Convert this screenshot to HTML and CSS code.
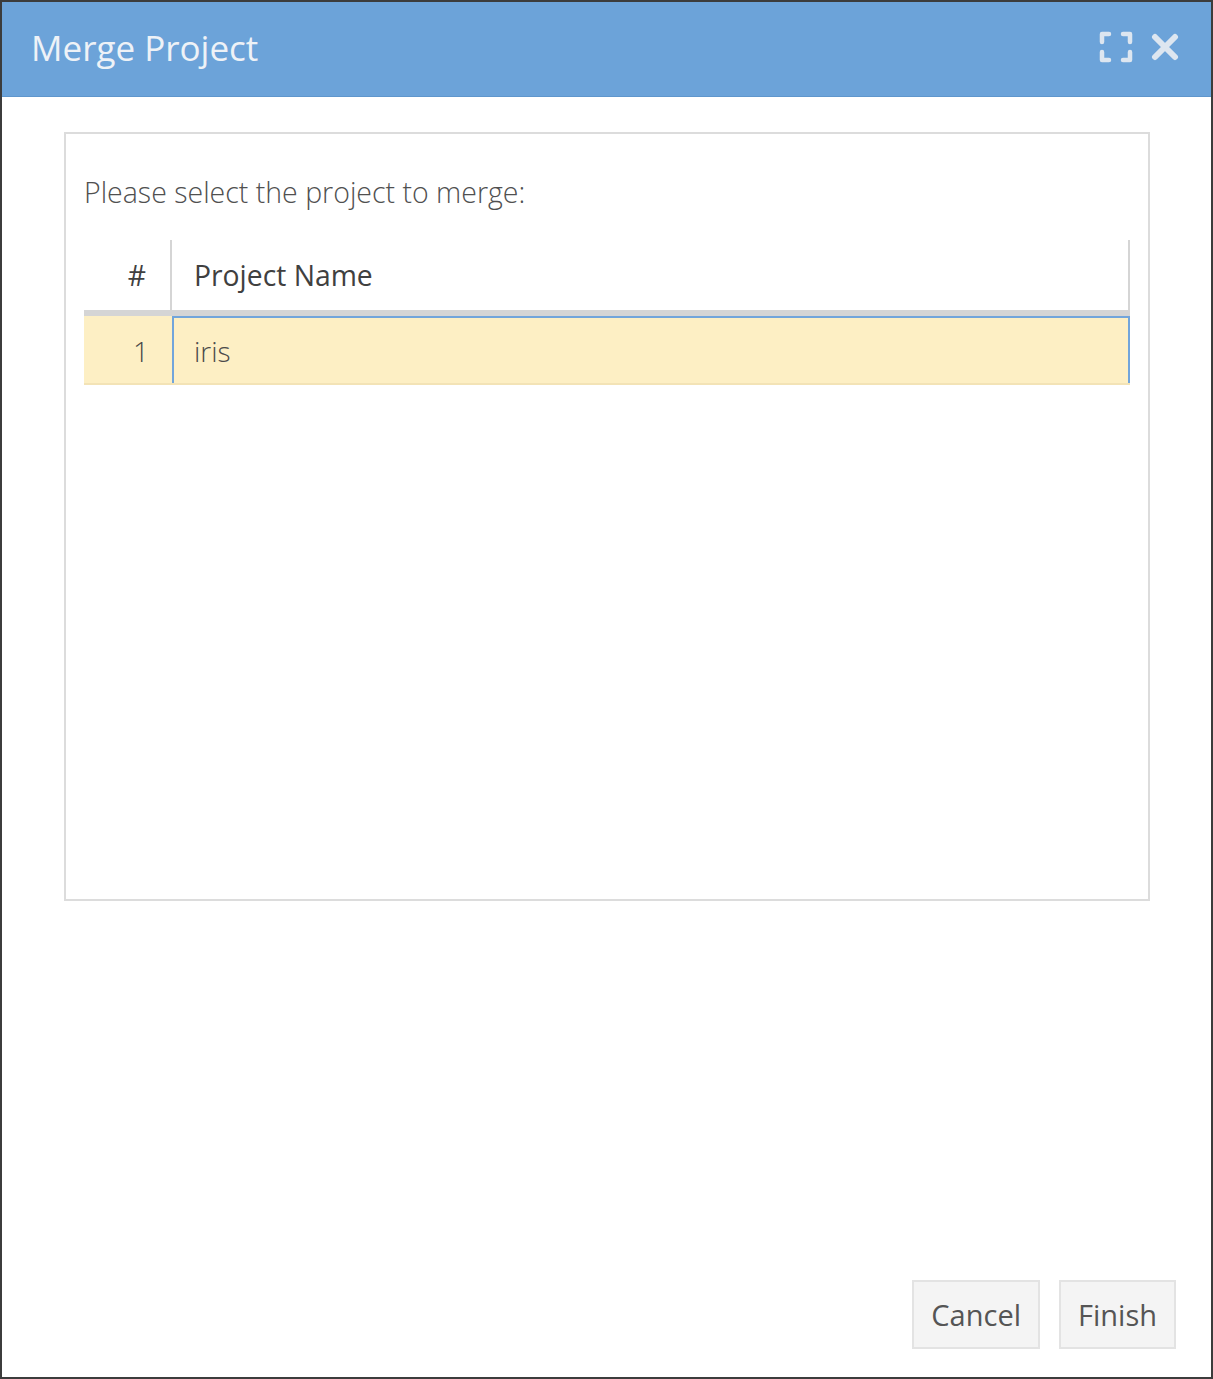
FILE: index.html
```html
<!DOCTYPE html>
<html>
<head>
<meta charset="utf-8">
<link rel="stylesheet" href="styles.css">
</head>
<body>
<div class="dialog">
  <div class="header">
    <div class="title">Merge Project</div>
    <div class="tools">
      <svg class="icon-max" width="34" height="32" viewBox="0 0 34 32">
        <path d="M3 11 V3 H10 M24 3 H31 V11 M31 21 V29 H24 M10 29 H3 V21" fill="none" stroke="#dde6f0" stroke-width="4.5" stroke-linecap="round" stroke-linejoin="round"/>
      </svg>
      <svg class="icon-close" width="28" height="28" viewBox="0 0 28 28">
        <path d="M4 4 L24 24 M24 4 L4 24" fill="none" stroke="#dde6f0" stroke-width="6" stroke-linecap="round"/>
      </svg>
    </div>
  </div>
  <div class="content">
    <div class="panel">
      <div class="prompt">Please select the project to merge:</div>
      <div class="grid">
        <div class="grid-head">
          <div class="col-num">#</div>
          <div class="col-name">Project Name</div>
        </div>
        <div class="grid-row selected">
          <div class="col-num">1</div>
          <div class="col-name cell-focus">iris</div>
        </div>
      </div>
    </div>
    <div class="buttons">
      <button class="btn">Cancel</button>
      <button class="btn">Finish</button>
    </div>
  </div>
</div>
</body>
</html>
```

FILE: styles.css
```css
html, body {
  margin: 0;
  padding: 0;
  background: #ffffff;
}
body {
  font-family: "Open Sans", "Noto Sans", sans-serif;
}
.dialog {
  width: 1213px;
  height: 1379px;
  box-sizing: border-box;
  border: 2px solid #3c3c3c;
  display: flex;
  flex-direction: column;
  background: #fff;
}
.header {
  height: 95px;
  box-sizing: border-box;
  background: #6ca3d9;
  border-bottom: 1px solid #5f96cc;
  display: flex;
  align-items: center;
  justify-content: space-between;
  padding: 0 32px 0 29px;
}
.title {
  color: #eef2f7;
  font-size: 35px;
  font-weight: 400;
  margin-top: -3px;
}
.tools {
  display: flex;
  align-items: center;
  gap: 18px;
  margin-top: -4px;
}
.content {
  flex: 1;
  display: flex;
  flex-direction: column;
  padding: 35px 61px 28px 62px;
}
.panel {
  height: 769px;
  box-sizing: border-box;
  border: 2px solid #dcdcdc;
  padding: 38px 18px 0 18px;
}
.prompt {
  font-size: 28.5px;
  font-weight: 300;
  color: #505050;
  line-height: 40px;
  margin-bottom: 28px;
}
.grid {
  display: flex;
  flex-direction: column;
}
.grid-head {
  display: flex;
  height: 76px;
  box-sizing: border-box;
  border-bottom: 6px solid #d5d5d5;
  border-right: 2px solid #d5d5d5;
  font-size: 28.3px;
  color: #404040;
}
.grid-head .col-num {
  width: 88px;
  box-sizing: border-box;
  border-right: 2px solid #d5d5d5;
  text-align: right;
  padding-right: 24px;
  line-height: 70px;
}
.grid-head .col-name {
  flex: 1;
  padding-left: 22px;
  line-height: 70px;
}
.grid-row {
  display: flex;
  height: 69px;
  box-sizing: border-box;
  font-size: 28px;
  font-weight: 300;
  color: #4a4a4a;
}
.grid-row.selected {
  background: #fdefc4;
  border-bottom: 2px solid #f3e3b6;
}
.grid-row .col-num {
  width: 88px;
  box-sizing: border-box;
  text-align: right;
  padding-right: 23px;
  line-height: 70px;
}
.grid-row .col-name {
  flex: 1;
  padding-left: 20px;
  line-height: 66px;
}
.cell-focus {
  border: 2px solid #72a5db;
  border-bottom-width: 0;
}
.buttons {
  margin-top: auto;
  display: flex;
  justify-content: flex-end;
  gap: 19px;
  margin-right: -26px;
}
.btn {
  height: 69px;
  box-sizing: border-box;
  background: #f4f4f4;
  border: 2px solid #e3e3e3;
  border-radius: 0;
  font-family: "Open Sans", "Noto Sans", sans-serif;
  font-size: 29px;
  color: #555;
  padding: 0 17px;
}
```
